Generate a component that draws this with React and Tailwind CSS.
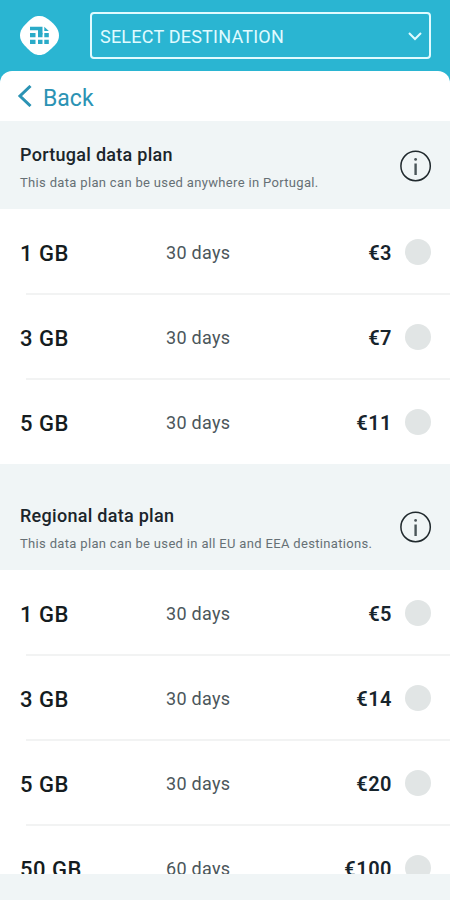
import React, { useState } from "react";

const sections = [
  {
    title: "Portugal data plan",
    description: "This data plan can be used anywhere in Portugal.",
    headerStyles: "h-[88px]",
    plans: [
      { size: "1 GB", duration: "30 days", price: "€3" },
      { size: "3 GB", duration: "30 days", price: "€7" },
      { size: "5 GB", duration: "30 days", price: "€11" },
    ],
  },
  {
    title: "Regional data plan",
    description: "This data plan can be used in all EU and EEA destinations.",
    headerStyles: "h-[106px] pt-[18px]",
    plans: [
      { size: "1 GB", duration: "30 days", price: "€5" },
      { size: "3 GB", duration: "30 days", price: "€14" },
      { size: "5 GB", duration: "30 days", price: "€20" },
      { size: "50 GB", duration: "60 days", price: "€100" },
    ],
  },
];

const Logo = () => (
  <svg className="h-10 w-10 shrink-0" viewBox="0 0 40 40">
    <path
      d="M19.500 0c4.500 0 7.500 2 11.500 5.500C36.500 10.500 39 14.500 39 19.500s-2.500 8.500-7.500 13S24 39 19.500 39 12 37 7.500 32.500 0 24.500 0 19.500 2.500 11 8 5.800 15 0 19.500 0Z"
      fill="#fff"
    />
    <g fill="#2aabc8">
      <path d="M10 10.800h12.500v7.700H18v-4.200h-8ZM24.300 10.800l4.500 4.200h-4.500Z" />
      <path d="M10 17h5.500v4.200H10ZM18 17h4.500v4.200H18ZM24.300 17h4.500v4.200h-4.500Z" />
      <path d="M10 23.800h5.500V28H10ZM18 23.800h4.500V28H18ZM24.300 23.800h4.500V28h-4.500Z" />
    </g>
  </svg>
);

const InfoIcon = () => (
  <svg className="h-8 w-8" viewBox="0 0 32 32" fill="none">
    <circle cx="15.600" cy="16" r="14.700" stroke="#20292d" strokeWidth="1.500" />
    <circle cx="15.600" cy="9.400" r="1.400" fill="#4a5559" />
    <path d="M15.600 13.500V25" stroke="#4a5559" strokeWidth="2.400" />
  </svg>
);

const SectionHeader = ({ section }) => (
  <div
    className={`flex items-start justify-between bg-[#f0f5f6] pl-5 pr-[18px] ${section.headerStyles}`}
  >
    <div className="pt-[22px]">
      <h2 className="text-[18px] leading-6 font-medium tracking-[0.28px] text-[#1b252b]">
        {section.title}
      </h2>
      <p className="mt-[6px] text-[13px] leading-5 tracking-[0.33px] whitespace-nowrap text-[#667075]">
        {section.description}
      </p>
    </div>
    <button type="button" className="mt-[29px]" aria-label="Plan details">
      <InfoIcon />
    </button>
  </div>
);

const PlanRow = ({ plan, isLast, selected, onSelect }) => (
  <button
    type="button"
    onClick={onSelect}
    className="flex h-[85px] w-full flex-col text-left"
  >
    <div className="flex h-[84px] w-full shrink-0 items-center pt-[4px] pr-[19px] pl-5">
      <span className="w-[146px] text-[22px] font-medium tracking-[0.5px] text-[#151c20]">
        {plan.size}
      </span>
      <span className="pb-[2px] text-[18px] tracking-[0.3px] text-[#4b565b]">
        {plan.duration}
      </span>
      <span className="ml-auto text-[20px] font-semibold tracking-[0.5px] text-[#17242c]">
        {plan.price}
      </span>
      <span
        className={`mt-[-3px] ml-[13px] h-[26px] w-[26px] rounded-full ${
          selected ? "bg-[#29b4d2]" : "bg-[#e1e5e5]"
        }`}
      />
    </div>
    <div
      className={`ml-[26px] h-[2px] w-[424px] shrink-0 ${isLast ? "" : "bg-[#f2f3f3]"}`}
    />
  </button>
);

export default function App() {
  const [selected, setSelected] = useState(null);

  return (
    <div className="flex h-[900px] w-[450px] flex-col overflow-hidden bg-[#2ab5d2] font-[Roboto,sans-serif]">
      <header className="flex h-[71px] shrink-0 items-start pt-3 pr-[19px] pl-5">
        <div className="pt-[4px]">
          <Logo />
        </div>
        <button
          type="button"
          className="ml-[30px] flex h-[47px] flex-1 items-center justify-between rounded-[4px] border-2 border-[#e0fbff] pr-[6px] pl-2 text-[18px] tracking-[0.22px] text-[#e0fbff]"
        >
          <span className="pt-[2px]">SELECT DESTINATION</span>
          <svg className="h-4 w-4" viewBox="0 0 16 16" fill="none">
            <path d="M2 5l6 6 6-6" stroke="currentColor" strokeWidth="2" />
          </svg>
        </button>
      </header>

      <main className="flex min-h-0 flex-1 flex-col overflow-hidden rounded-t-[12px] bg-white">
        <button
          type="button"
          className="flex h-[50px] shrink-0 items-center pl-[17px] text-[#2b93b4]"
        >
          <svg className="h-[22px] w-[15px]" viewBox="0 0 15 22" fill="none">
            <path d="M13.500 1L3 11l10.500 10" stroke="currentColor" strokeWidth="3" />
          </svg>
          <span className="pt-[6px] pl-[11px] text-[23px]">Back</span>
        </button>

        <div className="h-[753px] shrink-0 overflow-hidden">
          {sections.map((section) => (
            <section key={section.title}>
              <SectionHeader section={section} />
              {section.plans.map((plan, index) => {
                const id = `${section.title}-${plan.size}`;
                return (
                  <PlanRow
                    key={id}
                    plan={plan}
                    isLast={index === section.plans.length - 1}
                    selected={selected === id}
                    onSelect={() => setSelected(id)}
                  />
                );
              })}
            </section>
          ))}
        </div>
        {/* Bottom safe area */}
        <div className="flex-1 bg-[#f0f5f6]" />
      </main>
    </div>
  );
}
